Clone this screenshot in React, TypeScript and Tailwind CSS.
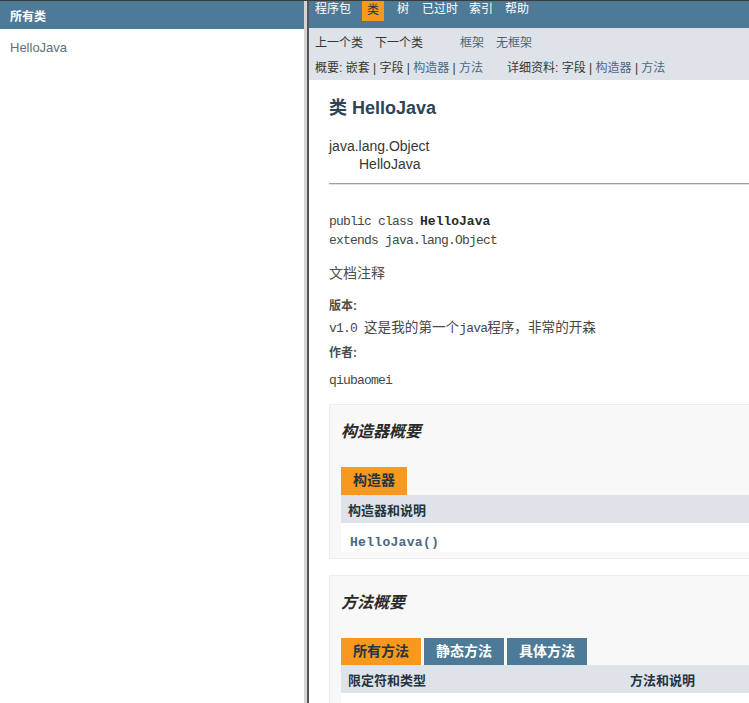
const SANS = "font-[family-name:'Liberation_Sans','Noto_Sans_CJK_SC',sans-serif]";
const MONO = "font-[family-name:'Liberation_Mono','Noto_Sans_CJK_SC',monospace]";

const SummaryBox = ({ title, children }: { title: string; children: React.ReactNode }) => (
  <div className="w-[700px] bg-[#f8f8f8] border border-[#ededed] pl-[11px] pr-[20px] pt-[17px] pb-[6px]">
    <h3 className="text-[16px] leading-[20px] font-bold italic text-[#2a2a2a]">{title}</h3>
    {children}
  </div>
);

export default function App() {
  return (
    <div className={`flex h-[703px] w-[749px] overflow-hidden border-t border-[#3a3a3a] bg-white ${SANS}`}>
      {/* left frame: all classes */}
      <div className="w-[304px] shrink-0 flex flex-col">
        <div className="h-[28px] bg-[#4d7a97] pl-[10px] pt-[9px]">
          <span className="block text-[12px] leading-[14px] font-bold text-white">所有类</span>
        </div>
        <div className="mt-[11px] pl-[10px] text-[13px] leading-[16px] text-[#5a6f84]">HelloJava</div>
      </div>

      {/* frame divider */}
      <div className="w-[3px] shrink-0 bg-[#d4d4d4]"></div>
      <div className="w-[2px] shrink-0 bg-[#555]"></div>

      {/* right frame: class page */}
      <div className="flex-1 overflow-hidden">
        <div className="w-[760px]">
          {/* top nav */}
          <div className="h-[27px] bg-[#4d7a97] flex items-start pl-[6px]">
            <span className="pt-[1px] text-[12px] leading-[14px] text-white">程序包</span>
            <span className="ml-[11px] h-[20px] w-[22px] bg-[#f8981d] text-[12px] leading-[14px] pt-[2px] text-center text-[#253441]">类</span>
            <span className="ml-[13px] pt-[1px] text-[12px] leading-[14px] text-white">树</span>
            <span className="ml-[13px] pt-[1px] text-[12px] leading-[14px] text-white">已过时</span>
            <span className="ml-[11px] pt-[1px] text-[12px] leading-[14px] text-white">索引</span>
            <span className="ml-[12px] pt-[1px] text-[12px] leading-[14px] text-white">帮助</span>
          </div>

          {/* sub nav */}
          <div className="h-[52px] bg-[#dee3e9] pl-[6px] pt-[2px] text-[12px]">
            <div className="h-[25px] flex items-center">
              <span className="text-[#353833]">上一个类</span>
              <span className="ml-[12px] text-[#353833]">下一个类</span>
              <span className="ml-[37px] text-[#4a6782]">框架</span>
              <span className="ml-[12px] text-[#4a6782]">无框架</span>
            </div>
            <div className="h-[25px] flex items-center whitespace-pre">
              <span className="text-[#353833]">概要: 嵌套 | 字段 | </span>
              <span className="text-[#4a6782]">构造器</span>
              <span className="text-[#353833]"> | </span>
              <span className="text-[#4a6782]">方法</span>
              <span className="ml-[24px] text-[#353833]">详细资料: 字段 | </span>
              <span className="text-[#4a6782]">构造器</span>
              <span className="text-[#353833]"> | </span>
              <span className="text-[#4a6782]">方法</span>
            </div>
          </div>

          {/* content */}
          <div className="pl-[20px] text-[#353833]">
            <h1 className="mt-[17px] text-[18px] leading-[22px] font-bold text-[#2c4557]">类 HelloJava</h1>
            <div className="mt-[18px] text-[14px] leading-[18px]">java.lang.Object</div>
            <div className="pl-[30px] text-[14px] leading-[18px]">HelloJava</div>
            <div className="mt-[10px] w-[720px] border-t border-[#9e9e9e] border-b border-b-[#e2e2e2]"></div>

            <div className={`mt-[27px] text-[13px] leading-[19px] tracking-[-0.8px] text-[#474747] ${MONO}`}>
              <div>
                public class <span className="font-bold tracking-[0px] text-[#2a2a2a]">HelloJava</span>
              </div>
              <div>extends java.lang.Object</div>
            </div>

            <div className="mt-[14px] text-[14px] leading-[18px] text-[#4d4d4d]">文档注释</div>
            <div className="mt-[16px] text-[12px] leading-[16px] font-bold text-[#4d4d4d]">版本:</div>
            <div className={`mt-[6px] text-[13px] leading-[18px] tracking-[-0.8px] text-[#474747] ${MONO}`}>
              v1.0 <span className="text-[13.6px] tracking-[0px]">这是我的第一个</span>java<span className="text-[13.6px] tracking-[0px]">程序，非常的开森</span>
            </div>
            <div className="mt-[7px] text-[12px] leading-[16px] font-bold text-[#4d4d4d]">作者:</div>
            <div className={`mt-[11px] text-[13px] leading-[18px] tracking-[-0.8px] text-[#474747] ${MONO}`}>qiubaomei</div>

            {/* constructor summary */}
            <div className="mt-[14px]">
              <SummaryBox title="构造器概要">
                <div className="mt-[25px] flex">
                  <span className="h-[28px] px-[12px] pt-[5px] bg-[#f8981d] text-[14px] leading-[16px] font-bold text-[#253441]">构造器</span>
                </div>
                <div className="h-[28px] bg-[#dee3e9] pl-[7px] pt-[8px] text-[13px] leading-[16px] font-bold text-[#253441]">构造器和说明</div>
                <div className="h-[29px] bg-white pl-[9px] pt-[6px]">
                  <span className={`text-[13px] leading-[16px] font-semibold tracking-[0.3px] text-[#4a6782] ${MONO}`}>HelloJava()</span>
                </div>
              </SummaryBox>
            </div>

            {/* method summary */}
            <div className="mt-[16px]">
              <SummaryBox title="方法概要">
                <div className="mt-[25px] flex gap-[3px]">
                  <span className="h-[27px] px-[12px] pt-[5px] bg-[#f8981d] text-[14px] leading-[16px] font-bold text-[#253441]">所有方法</span>
                  <span className="h-[27px] px-[12px] pt-[5px] bg-[#4d7a97] text-[14px] leading-[16px] font-bold text-white">静态方法</span>
                  <span className="h-[27px] px-[12px] pt-[5px] bg-[#4d7a97] text-[14px] leading-[16px] font-bold text-white">具体方法</span>
                </div>
                <div className="h-[28px] bg-[#dee3e9] flex text-[13px] leading-[16px] font-bold text-[#253441]">
                  <div className="w-[282px] pl-[7px] pt-[8px]">限定符和类型</div>
                  <div className="pl-[7px] pt-[8px]">方法和说明</div>
                </div>
                <div className="h-[40px] bg-white"></div>
              </SummaryBox>
            </div>
          </div>
        </div>
      </div>
    </div>
  );
}
